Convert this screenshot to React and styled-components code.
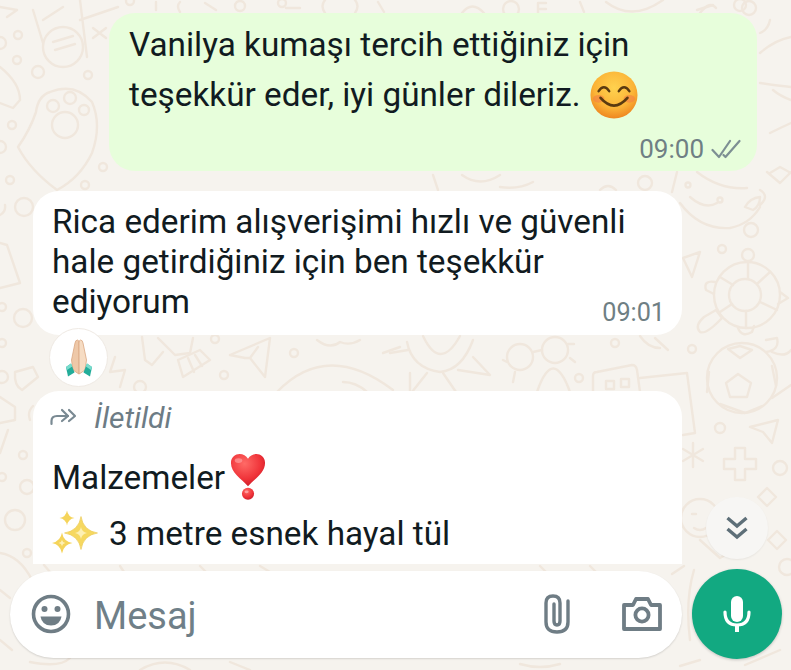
import React from "react";
import styled, { createGlobalStyle } from "styled-components";

const GlobalStyle = createGlobalStyle`
  html, body {
    margin: 0;
    padding: 0;
    background: #f6f3ee;
  }
  * {
    box-sizing: border-box;
  }
`;

const Doodles = () => (
  <DoodleSvg viewBox="0 0 791 670" fill="none" stroke="#f0e7dd" strokeWidth="2.4" strokeLinecap="round" strokeLinejoin="round">
    {/* calculator */}
    <path d="M33 10 L43 43 M43 20 L63 7 M80 20 L118 7 M80 0 L87 57 M93 28 L106 38 M106 28 L93 38" />
    <circle cx="63" cy="47" r="20" />
    <path d="M53 42 L73 36 M55 50 L75 44" />
    {/* paw */}
    <path d="M18 147 Q30 130 36 112 Q38 96 50 92 Q75 82 92 102 Q102 125 92 153 Q80 178 57 190 Q30 170 18 147Z" />
    <circle cx="53" cy="106" r="6" />
    <circle cx="70" cy="98" r="6" />
    <circle cx="84" cy="110" r="5" />
    <circle cx="65" cy="125" r="13" />
    <path d="M0 67 Q20 83 20 100 L13 108 L0 103 M0 7 L17 10 L7 17" />
    {/* dots, left column */}
    <circle cx="18" cy="35" r="4" />
    <circle cx="0" cy="43" r="6" />
    <circle cx="17" cy="60" r="4" />
    <circle cx="38" cy="72" r="6" />
    <circle cx="88" cy="75" r="4" />
    <circle cx="12" cy="125" r="4" />
    <circle cx="0" cy="147" r="6" />
    <circle cx="10" cy="180" r="4" />
    <circle cx="85" cy="185" r="4" />
    <circle cx="103" cy="167" r="4" />
    {/* top strip */}
    <circle cx="130" cy="1" r="4" />
    <path d="M156 2 V10 M180 2 Q176 6 180 12 M205 3 L216 10 M286 8 L300 8 M325 0 Q320 6 325 13 M355 0 Q360 6 355 13 M378 2 L384 12 M462 13 Q472 0 484 13 M580 2 L584 12 M606 2 Q632 22 663 0 M700 13 Q710 0 716 8" />
    <circle cx="240" cy="6" r="5" />
    <circle cx="282" cy="3" r="4" />
    <circle cx="511" cy="9" r="8" />
    <path d="M538 3 H546 M538 9 H546 M538 3 V13" />
    <circle cx="749" cy="8" r="7" />
    {/* right strip */}
    <circle cx="740" cy="5" r="6" />
    <path d="M697 10 L713 5 M770 20 Q768 30 760 33 M760 53 Q775 40 791 37 M760 83 Q778 86 791 87 M773 90 Q780 96 791 100 M770 133 Q780 128 791 123 M770 173 L780 167 L791 173" />
    {/* gap below first bubble */}
    <path d="M433 175 L438 190 M462 175 Q480 188 500 175 M500 187 Q518 190 533 182 M600 190 Q608 182 616 190 M677 172 L672 192 M697 172 Q720 190 747 188 M767 172 L780 183 L791 172" />
    <circle cx="645" cy="183" r="7" />
    <circle cx="688" cy="185" r="2.5" />
    {/* smiley, top right */}
    <path d="M680 203 Q700 230 730 228 Q750 224 760 207" />
    <path d="M690 197 Q705 210 717 203" />
    <circle cx="720" cy="200" r="2.5" />
    <path d="M745 207 Q750 198 760 197 Q760 206 753 210Z M760 190 Q770 196 760 205" />
    <circle cx="751" cy="230" r="7" />
    <circle cx="722" cy="249" r="4" />
    <path d="M683 258 L700 252 L692 277Z" />
    {/* turtle */}
    <circle cx="747" cy="295" r="33" />
    <circle cx="745" cy="295" r="16" />
    <path d="M748 262 V279 M770 272 L758 283 M720 277 L733 285 M777 310 L760 302 M720 312 L732 304 M746 311 V328" />
    <circle cx="748" cy="255" r="6" />
    <path d="M715 282 Q703 280 706 290 L714 294 M704 317 Q694 326 700 332 Q706 335 722 318 L716 310Z" />
    <path d="M738 328 Q742 338 752 332 L754 326 M780 292 L788 298 L778 304" />
    {/* football */}
    <circle cx="742" cy="378" r="35" />
    <path d="M738 374 L751 383 L747 397 L730 397 L726 383Z" />
    <path d="M728 349 L740 346 L752 350 L740 358Z M709 372 L707 392 M772 366 L776 386 M720 404 L745 413 L762 406" />
    <path d="M766 352 Q780 350 777 338 L766 340 M772 352 Q785 358 791 350 M772 398 L791 385" />
    <circle cx="692" cy="349" r="4" />
    <circle cx="720" cy="428" r="5" />
    {/* second to third bubble gap, left */}
    <path d="M142 337 L145 360 L152 365 L163 352 M158 338 L175 355 L190 353 L193 338" />
    <path d="M178 360 L183 377 L210 360 L200 350 L178 360 M188 358 L194 372 M195 355 L202 366" />
    <circle cx="215" cy="339" r="4" />
    <path d="M230 355 L270 338 L265 377 L250 358 L245 358 L230 355 M250 358 L258 347" />
    <circle cx="294" cy="353" r="4" />
    <circle cx="224" cy="375" r="4" />
    <circle cx="140" cy="387" r="6" />
    <path d="M115 357 L110 372 L125 370 L120 387" />
    <path d="M277 392 Q327 340 393 390 M343 382 Q356 382 367 392" />
    <path d="M317 340 Q330 350 340 342 Q350 346 360 340 M383 353 L400 347" />
    {/* same gap, middle */}
    <path d="M423 336 Q440 372 460 336" />
    <path d="M407 342 Q412 368 440 372 Q462 370 473 340" />
    <path d="M473 357 L490 375 L458 370 M410 373 L410 392 M427 373 L412 392 M443 373 L456 392 M408 350 L390 353" />
    <circle cx="520" cy="357" r="13" />
    <circle cx="555" cy="350" r="13" />
    <path d="M533 352 L542 350 M507 362 L503 360 M515 372 L513 382 M570 358 L575 362 M568 344 L574 344" />
    <circle cx="615" cy="343" r="4" />
    <circle cx="579" cy="378" r="4" />
    <path d="M537 392 Q553 345 570 392" />
    {/* the boxes */}
    <path d="M593 392 V376 Q593 372 597 372 L632 365 Q636 365 637 370 L640 392 M640 378 L687 373 L695 433 L683 435" />
    <rect x="606" y="381" width="8" height="8" />
    <rect x="621" y="379" width="8" height="8" />
    <path d="M640 336 Q648 348 660 348 M655 338 L668 350" />
    {/* left column, middle */}
    <circle cx="24" cy="207" r="9" />
    <path d="M0 215 Q6 212 5 205 M0 243 L7 245 L20 283 L0 288" />
    <circle cx="23" cy="318" r="9" />
    <circle cx="2" cy="307" r="4" />
    <circle cx="2" cy="343" r="4" />
    <circle cx="2" cy="377" r="6" />
    <path d="M15 372 L33 367 L38 377 L22 390 Q14 386 15 372Z" />
    <path d="M0 397 L15 407 L15 420 L0 423 M8 430 L0 453 M33 406 Q27 412 30 420" />
    <circle cx="23" cy="455" r="4" />
    <circle cx="2" cy="477" r="4" />
    <circle cx="27" cy="487" r="7" />
    <circle cx="15" cy="520" r="10" />
    <circle cx="27" cy="553" r="4" />
    <path d="M0 553 Q20 556 32 580 M0 590 L10 598 M0 640 L12 650" />
    {/* right column, lower */}
    <path d="M750 427 L778 420 L772 443 L763 432Z" />
    <path d="M735 448 h10 v11 h11 v10 h-11 v11 h-10 v-11 h-11 v-10 h11Z" />
    <circle cx="780" cy="468" r="7" />
    <path d="M693 443 V467 M683 449 L703 461 M703 449 L683 461" />
    <circle cx="700" cy="518" r="19" />
    <path d="M692 514 L696 514 M694 528 Q700 532 706 528" />
    <path d="M758 497 L767 488 L776 497 L767 506Z M768 540 L777 531 L786 540 L777 549Z M700 540 L720 558 L730 552" />
    <circle cx="787" cy="567" r="8" />
    {/* just above the composer */}
    <path d="M44 565 L50 572 M120 566 L124 572 M200 566 L206 572 M260 566 L270 572 M540 566 L546 572 M590 566 L596 572 M684 566 L672 574" />
    {/* bottom edge */}
    <path d="M30 662 Q60 668 70 658 M140 670 Q165 655 190 670 M230 662 L250 670 M520 664 Q540 670 560 664 M694 570 Q685 600 690 640 M745 665 L780 650 M680 666 L700 660" />
  </DoodleSvg>
);

const SmileEmoji = () => (
  <EmojiSvg $w={48} viewBox="0 0 50 50">
    <defs>
      <radialGradient id="smileFace" cx="50%" cy="35%" r="65%">
        <stop offset="0%" stopColor="#ffd24f" />
        <stop offset="65%" stopColor="#fbb437" />
        <stop offset="100%" stopColor="#ee8620" />
      </radialGradient>
    </defs>
    <circle cx="25" cy="25" r="24.5" fill="url(#smileFace)" />
    <ellipse cx="9" cy="29" rx="6" ry="4" fill="#f47f45" opacity="0.6" />
    <ellipse cx="41" cy="29" rx="6" ry="4" fill="#f47f45" opacity="0.6" />
    <path d="M9 21 Q14.5 13 20 21 M30 21 Q35.5 13 41 21" fill="none" stroke="#5a3a10" strokeWidth="2.6" strokeLinecap="round" />
    <path d="M11 28 Q25 44 39 28" fill="none" stroke="#5a3a10" strokeWidth="2.8" strokeLinecap="round" />
  </EmojiSvg>
);

const PrayEmoji = () => (
  <EmojiSvg $w={28} viewBox="0 0 28 38">
    <path d="M12.5 1 Q10.5 1 10 4 L6.5 21 L8 31 L13.8 35 L14 4 Q14 1 12.5 1Z" fill="#eec8a8" stroke="#dba781" strokeWidth="0.8" />
    <path d="M15.5 1 Q17.5 1 18 4 L21.5 21 L20 31 L14.2 35 L14 4 Q14 1 15.5 1Z" fill="#f6dcc3" stroke="#dba781" strokeWidth="0.8" />
    <path d="M1 28 L6 24.5 L9.5 33.5 L3 37.5Z" fill="#23ad9a" />
    <path d="M27 28 L22 24.5 L18.5 33.5 L25 37.5Z" fill="#23ad9a" />
    <path d="M6 24.5 L7.2 27.6 L2 31 L1 28Z M22 24.5 L20.8 27.6 L26 31 L27 28Z" fill="#79dccd" />
  </EmojiSvg>
);

const HeartEmoji = () => (
  <EmojiSvg $w={36} viewBox="0 0 38 50">
    <defs>
      <radialGradient id="heartFill" cx="40%" cy="30%" r="70%">
        <stop offset="0%" stopColor="#ff6a66" />
        <stop offset="70%" stopColor="#ef3238" />
        <stop offset="100%" stopColor="#cf1f2c" />
      </radialGradient>
    </defs>
    <path d="M19 35 C12 27 1 21 1 10.5 C1 4 6 1 10 1 C14 1 17 3 19 6 C21 3 24 1 28 1 C32 1 37 4 37 10.5 C37 21 26 27 19 35Z" fill="url(#heartFill)" />
    <circle cx="19" cy="43" r="6.4" fill="url(#heartFill)" />
    <ellipse cx="17.5" cy="41" rx="2.2" ry="1.4" fill="#ff9c9c" />
    <ellipse cx="9" cy="8" rx="4" ry="2.5" fill="#ff9c9c" opacity="0.7" />
  </EmojiSvg>
);

const star = (cx, cy, r) =>
  `M${cx} ${cy - r} Q${cx + r * 0.14} ${cy - r * 0.14} ${cx + r} ${cy} Q${cx + r * 0.14} ${cy + r * 0.14} ${cx} ${cy + r} Q${cx - r * 0.14} ${cy + r * 0.14} ${cx - r} ${cy} Q${cx - r * 0.14} ${cy - r * 0.14} ${cx} ${cy - r}Z`;

const SparklesEmoji = () => (
  <EmojiSvg $w={46} viewBox="0 0 46 46">
    <path d={star(29, 23, 16.5)} fill="#f6d860" stroke="#e9c544" strokeWidth="0.6" />
    <path d={star(29, 23, 6)} fill="#fdf0b4" />
    <path d={star(15, 8, 7.5)} fill="#f5d45a" />
    <path d={star(10, 33, 10.5)} fill="#f5d45a" />
    <path d={star(10, 33, 3.5)} fill="#fdf0b4" />
  </EmojiSvg>
);

const DoubleCheck = () => (
  <svg width="30" height="20" viewBox="0 0 30 20" fill="none" stroke="#7d8f93" strokeWidth="2.2" strokeLinecap="round" strokeLinejoin="round">
    <path d="M1.5 11 L8 18 L19 2" />
    <path d="M12.5 16 L14.5 18 L28.5 2" />
  </svg>
);

const ForwardIcon = () => (
  <svg width="27" height="18" viewBox="0 0 27 18" fill="none" stroke="#7a8a93" strokeWidth="2.2" strokeLinecap="round" strokeLinejoin="round">
    <path d="M1.5 16 V13 Q1.5 8 7 8 H18" />
    <path d="M12 2 L18 8 L12 13" />
    <path d="M19 2 L25 8 L19 13" />
  </svg>
);

const SmileyIcon = () => (
  <svg width="40" height="40" viewBox="0 0 40 40">
    <circle cx="20" cy="20" r="17.5" fill="none" stroke="#6f7d85" strokeWidth="3.6" />
    <circle cx="13.5" cy="15" r="3" fill="#6f7d85" />
    <circle cx="26.5" cy="15" r="3" fill="#6f7d85" />
    <path d="M9.5 22.5 H30.5 Q29 31.5 20 31.5 Q11 31.5 9.5 22.5Z" fill="#6f7d85" />
  </svg>
);

const ClipIcon = () => (
  <svg width="26" height="40" viewBox="0 0 26 40" fill="none" stroke="#6f7d85" strokeWidth="3.4" strokeLinecap="round">
    <path d="M24 7 V28 Q24 38 13 38 Q2 38 2 28 V9 Q2 2 9 2 Q16 2 16 9 V27 Q16 31 13 31 Q10 31 10 27 V10" />
  </svg>
);

const CameraIcon = () => (
  <svg width="40" height="34" viewBox="0 0 40 34" fill="none" stroke="#6f7d85" strokeWidth="3.8" strokeLinejoin="round">
    <path d="M2 8 H11 L14 2 H26 L29 8 H38 V32 H2Z" />
    <circle cx="20" cy="18" r="6.6" />
  </svg>
);

const MicIcon = () => (
  <svg width="28" height="36" viewBox="0 0 28 36" fill="#fff">
    <rect x="8" y="0" width="12" height="26" rx="6" />
    <path d="M2 16 Q2 29 14 29 Q26 29 26 16" fill="none" stroke="#fff" strokeWidth="3.2" strokeLinecap="round" />
    <rect x="12" y="28" width="4" height="8" />
  </svg>
);

const ChevronsIcon = () => (
  <svg width="22" height="24" viewBox="0 0 22 24" fill="none" stroke="#5e6f78" strokeWidth="3.4">
    <path d="M1.5 2 L11 10 L20.5 2" />
    <path d="M1.5 13 L11 21 L20.5 13" />
  </svg>
);

const App = () => (
  <Page>
    <GlobalStyle />
    <Doodles />
    <Messages>
      <Bubble $out>
        <OutText>Vanilya kumaşı tercih ettiğiniz için</OutText>
        <OutText>
          teşekkür eder, iyi günler dileriz. <SmileEmoji />
        </OutText>
        <Meta>
          <Time>09:00</Time>
          <DoubleCheck />
        </Meta>
      </Bubble>

      <Bubble>
        <InText>Rica ederim alışverişimi hızlı ve güvenli</InText>
        <InText>hale getirdiğiniz için ben teşekkür</InText>
        <LastLine>
          <InText>ediyorum</InText>
          <LastTime>09:01</LastTime>
        </LastLine>
      </Bubble>
      <Reaction>
        <PrayEmoji />
      </Reaction>

      <ForwardedBubble>
        <ForwardLabel>
          <ForwardIcon />
          <span>İletildi</span>
        </ForwardLabel>
        <EmojiLine>
          Malzemeler
          <HeartEmoji />
        </EmojiLine>
        <ListLine>
          <SparklesEmoji />3 metre esnek hayal tül
        </ListLine>
      </ForwardedBubble>
    </Messages>

    <ScrollDown>
      <ChevronsIcon />
    </ScrollDown>

    <ComposerRow>
      <Composer>
        <SmileyIcon />
        <Placeholder>Mesaj</Placeholder>
        <ClipIcon />
        <CameraIcon />
      </Composer>
      <MicButton>
        <MicIcon />
      </MicButton>
    </ComposerRow>
  </Page>
);

const Page = styled.div`
  position: relative;
  display: flex;
  flex-direction: column;
  width: 791px;
  height: 670px;
  overflow: hidden;
  padding-top: 13px;
  background: #f6f3ee;
  font-family: Roboto, "Liberation Sans", sans-serif;
  color: #111b21;
`;

const DoodleSvg = styled.svg`
  position: absolute;
  inset: 0;
  width: 791px;
  height: 670px;
`;

const EmojiSvg = styled.svg`
  width: ${(p) => p.$w}px;
  flex: none;
`;

const Messages = styled.div`
  position: relative;
  display: flex;
  flex-direction: column;
  padding: 0 34px 0 33px;
`;

const Bubble = styled.div`
  display: flex;
  flex-direction: column;
  align-self: ${(p) => (p.$out ? "flex-end" : "flex-start")};
  width: ${(p) => (p.$out ? 648 : 649)}px;
  padding: ${(p) => (p.$out ? "7px 16px 8px 20px" : "11px 17px 13px 19px")};
  margin-bottom: ${(p) => (p.$out ? 20 : 0)}px;
  border-radius: 26px;
  background: ${(p) => (p.$out ? "#e7fedb" : "#ffffff")};
`;

const OutText = styled.div`
  display: flex;
  align-items: center;
  gap: 10px;
  height: 50px;
  font-size: 33.3px;
  line-height: 50px;
  white-space: nowrap;
`;

const InText = styled.div`
  height: 40px;
  font-size: 33.3px;
  line-height: 40px;
  white-space: nowrap;
`;

const LastLine = styled.div`
  display: flex;
  justify-content: space-between;
  align-items: flex-end;
`;

const Meta = styled.div`
  display: flex;
  align-items: center;
  justify-content: flex-end;
  gap: 7px;
  height: 28px;
  margin-top: 15px;
`;

const Time = styled.span`
  font-size: 26px;
  line-height: 28px;
  color: #6f7f84;
`;

const LastTime = styled(Time)`
  margin-bottom: -5px;
  font-size: 25.2px;
`;

const Reaction = styled.div`
  display: flex;
  align-items: center;
  justify-content: center;
  width: 59px;
  height: 59px;
  margin: -7px 0 0 16px;
  border-radius: 50%;
  border: 1px solid #efeae4;
  background: #ffffff;
`;

const ForwardedBubble = styled.div`
  display: flex;
  flex-direction: column;
  width: 649px;
  height: 173px;
  margin-top: 4px;
  padding: 7px 19px 0 17px;
  overflow: hidden;
  border-radius: 26px 26px 0 0;
  background: #ffffff;
`;

const ForwardLabel = styled.div`
  display: flex;
  align-items: center;
  gap: 17px;
  height: 38px;
  font-size: 30px;
  font-style: italic;
  color: #6d7c85;
`;

const EmojiLine = styled.div`
  display: flex;
  align-items: center;
  gap: 5px;
  height: 52px;
  margin: 15px 0 0 2px;
  font-size: 33.3px;
`;

const ListLine = styled.div`
  display: flex;
  align-items: center;
  gap: 11px;
  height: 48px;
  margin: 6px 0 0 2px;
  font-size: 33.3px;
  white-space: nowrap;
`;

const ScrollDown = styled.div`
  position: absolute;
  right: 23px;
  bottom: 111px;
  display: flex;
  align-items: center;
  justify-content: center;
  width: 62px;
  height: 62px;
  border-radius: 50%;
  background: #f7f6f4;
  box-shadow: 0 1px 2px rgba(0, 0, 0, 0.06);
`;

const ComposerRow = styled.div`
  position: relative;
  display: flex;
  align-items: center;
  gap: 10px;
  margin-top: 5px;
  padding: 0 9px 0 10px;
`;

const Composer = styled.div`
  display: flex;
  align-items: center;
  width: 672px;
  height: 87px;
  padding: 0 20px 0 21px;
  border-radius: 44px;
  background: #ffffff;
  box-shadow: 0 1px 2px rgba(0, 0, 0, 0.14);
  svg:nth-of-type(2) {
    margin-right: 52px;
  }
`;

const Placeholder = styled.span`
  flex: 1;
  margin-left: 23px;
  padding-top: 3px;
  font-size: 38px;
  color: #6f7f88;
`;

const MicButton = styled.div`
  display: flex;
  align-items: center;
  justify-content: center;
  width: 90px;
  height: 90px;
  border-radius: 50%;
  background: #12a981;
  box-shadow: 0 1px 3px rgba(0, 0, 0, 0.2);
`;

export default App;
